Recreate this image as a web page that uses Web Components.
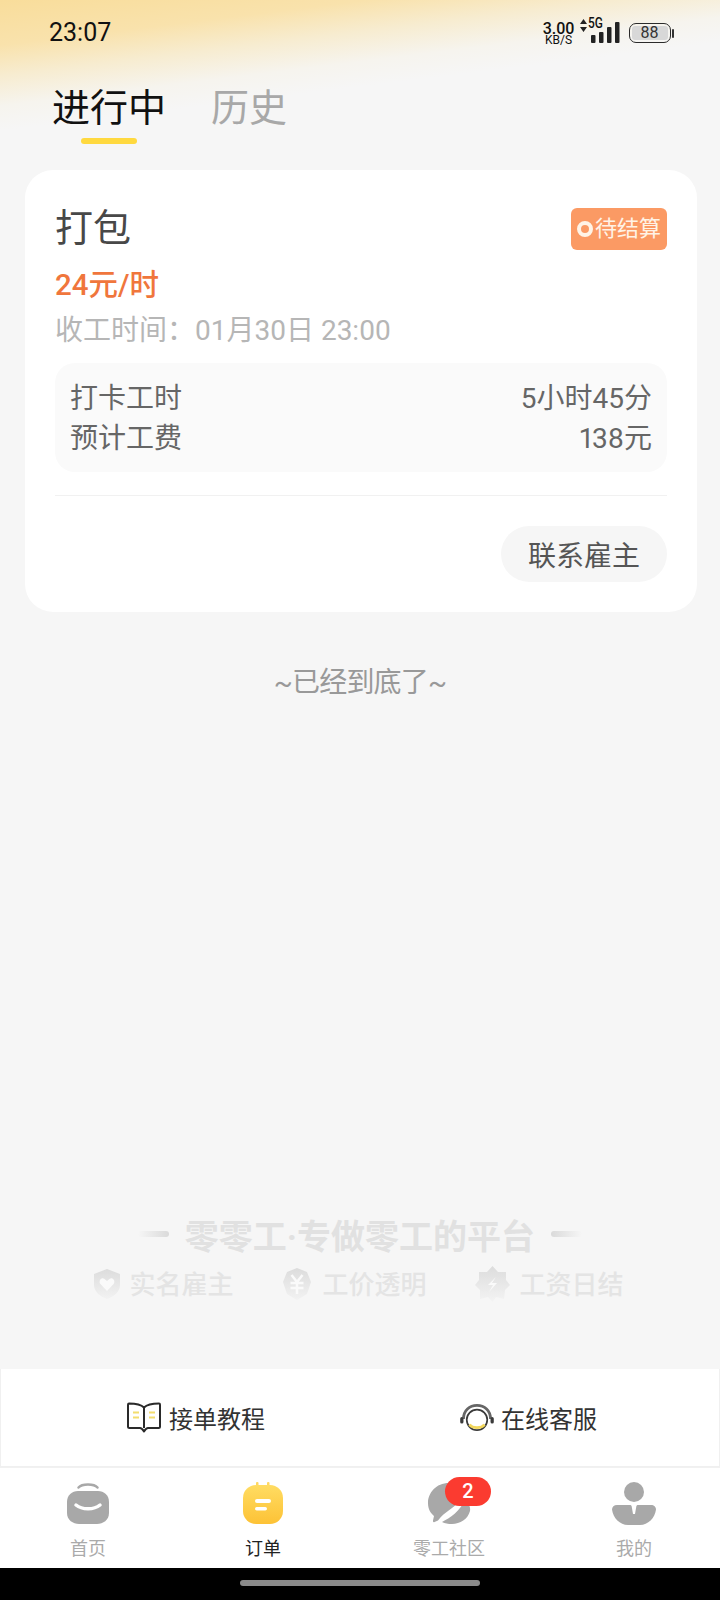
<!DOCTYPE html>
<html lang="zh">
<head>
<meta charset="utf-8">
<title>订单</title>
<style>
  html, body { margin: 0; padding: 0; }
  body { width: 720px; height: 1600px; overflow: hidden; font-family: Roboto, "Noto Sans CJK SC", sans-serif; }
</style>
</head>
<body>
<order-page>
  <status-bar></status-bar>
  <order-tabs></order-tabs>
  <order-card title="打包" wage="24元/时" finish="收工时间：01月30日 23:00" status="待结算" action="联系雇主">
    <info-row label="打卡工时" value="5小时45分"></info-row>
    <info-row label="预计工费" value="138元"></info-row>
  </order-card>
  <end-note></end-note>
  <brand-mark slot="bottom"></brand-mark>
  <help-bar slot="bottom"></help-bar>
  <tab-bar slot="bottom"></tab-bar>
  <gesture-bar slot="bottom"></gesture-bar>
</order-page>

<script>
class OrderPage extends HTMLElement {
    connectedCallback() {
        this.attachShadow({ mode: "open" })
        this.shadowRoot.innerHTML = `
      <style>
        :host {
          display: flex;
          flex-direction: column;
          width: 720px;
          height: 1600px;
          background: linear-gradient(173deg, #f9dd9b 0, #f9e2ac 45px, #f7ecd0 75px, #f6f4ee 105px, #f6f6f6 130px);
        }
        .grow { flex: 1; }
      </style>
      <slot></slot>
      <div class="grow"></div>
      <slot name="bottom"></slot>
    `
    }
}

class StatusBar extends HTMLElement {
    connectedCallback() {
        this.attachShadow({ mode: "open" })
        this.shadowRoot.innerHTML = `
      <style>
        :host {
          display: flex;
          align-items: center;
          justify-content: space-between;
          height: 64px;
          padding: 0 46px 0 49px;
          color: #111;
        }
        .time { font-size: 25px; }
        .right { display: flex; align-items: center; height: 32px; margin-top: 2px; }
        .speed {
          display: flex;
          flex-direction: column;
          align-items: center;
          width: 34px;
          margin-top: 1px;
        }
        .speed b { font-size: 16px; font-weight: 500; line-height: 13px; height: 13px; }
        .speed i { font-size: 12px; font-style: normal; line-height: 11px; height: 11px; }
        .arrows { margin: 0 3px 16px 4px; }
        .net { position: relative; width: 30px; height: 22px; margin-top: -2px; }
        .net span {
          position: absolute;
          left: -2px;
          top: -5px;
          font-size: 14px;
          line-height: 14px;
          font-weight: 500;
          transform: scaleX(.85);
          transform-origin: left top;
        }
        .net svg { display: block; }
        .battery {
          box-sizing: border-box;
          display: flex;
          width: 42px;
          height: 20px;
          margin-left: 9px;
          padding: 2px;
          border: 1.5px solid #2b2b2b;
          border-radius: 7px;
        }
        .battery span {
          flex: 1;
          border-radius: 3px;
          background: #d8d8d8;
          font-size: 16px;
          line-height: 13px;
          text-align: center;
          color: #333;
        }
        .tip { width: 2px; height: 9px; margin-left: 1.5px; border-radius: 1px; background: #333; }
      </style>
      <span class="time">23:07</span>
      <div class="right">
        <div class="speed"><b>3.00</b><i>KB/S</i></div>
        <svg class="arrows" width="7" height="13" viewBox="0 0 7 13"><path d="M3.500 0 7 5H0zM3.500 13 0 8h7z" fill="#222"/></svg>
        <div class="net">
          <span>5G</span>
          <svg width="30" height="22" viewBox="0 0 30 22">
            <rect x="1" y="14" width="4.500" height="8" rx="1" fill="#222"/>
            <rect x="9" y="11" width="4.500" height="11" rx="1" fill="#222"/>
            <rect x="17" y="6" width="4.500" height="16" rx="1" fill="#222"/>
            <rect x="25" y="1" width="4.500" height="21" rx="1" fill="#222"/>
          </svg>
        </div>
        <div class="battery"><span>88</span></div>
        <div class="tip"></div>
      </div>
    `
    }
}

class OrderTabs extends HTMLElement {
    connectedCallback() {
        this.attachShadow({ mode: "open" })
        this.shadowRoot.innerHTML = `
      <style>
        :host {
          display: flex;
          gap: 45px;
          height: 106px;
          padding-left: 52px;
          box-sizing: border-box;
          font-size: 38px;
        }
        .tab {
          display: flex;
          flex-direction: column;
          align-items: center;
          line-height: 50px;
          padding-top: 19px;
          color: #a8a8a8;
        }
        .tab.on { color: #111; }
        .line { width: 56px; height: 6px; margin-top: 5px; border-radius: 3px; background: #ffd93f; }
      </style>
      <div class="tab on">进行中<div class="line"></div></div>
      <div class="tab">历史</div>
    `
    }
}

class OrderCard extends HTMLElement {
    connectedCallback() {
        this.attachShadow({ mode: "open" })
        this.shadowRoot.innerHTML = `
      <style>
        :host {
          display: block;
          box-sizing: border-box;
          width: 672px;
          height: 442px;
          margin-left: 25px;
          padding: 33px 30px 0;
          border-radius: 28px;
          background: #fff;
        }
        .head { display: flex; justify-content: space-between; align-items: flex-start; }
        .title { font-size: 38px; line-height: 50px; color: #484848; }
        .badge {
          box-sizing: border-box;
          display: flex;
          align-items: center;
          gap: 2px;
          width: 96px;
          height: 42px;
          margin-top: 5px;
          padding: 0 0 7px 6px;
          border-radius: 6px;
          background: #fb9a64;
          font-size: 22px;
          color: #fff3e6;
        }
        .ring { width: 8px; height: 8px; margin-top: 7px; border: 4px solid #fff3e6; border-radius: 50%; }
        .wage { margin-top: 12px; font-size: 29.500px; line-height: 40px; font-weight: 500; color: #f0763c; }
        .finish { margin-top: 4px; font-size: 28px; line-height: 44px; color: #b6b6b6; }
        .box {
          display: flex;
          flex-direction: column;
          margin-top: 10px;
          padding: 16px 15px 13px;
          border-radius: 20px;
          background: #fafafa;
        }
        .rule { height: 1px; margin-top: 23px; background: #f1f1f1; }
        .foot { display: flex; justify-content: flex-end; margin-top: 30px; }
        .btn {
          display: flex;
          align-items: center;
          justify-content: center;
          width: 166px;
          height: 56px;
          border-radius: 28px;
          background: #f6f6f6;
          font-size: 28px;
          color: #555;
        }
      </style>
      <div class="head">
        <div class="title">${this.getAttribute("title")}</div>
        <div class="badge"><span class="ring"></span>${this.getAttribute("status")}</div>
      </div>
      <div class="wage">${this.getAttribute("wage")}</div>
      <div class="finish">${this.getAttribute("finish")}</div>
      <div class="box"><slot></slot></div>
      <div class="rule"></div>
      <div class="foot"><div class="btn">${this.getAttribute("action")}</div></div>
    `
    }
}

class InfoRow extends HTMLElement {
    connectedCallback() {
        this.attachShadow({ mode: "open" })
        this.shadowRoot.innerHTML = `
      <style>
        :host {
          display: flex;
          justify-content: space-between;
          height: 40px;
          line-height: 40px;
          font-size: 28px;
          color: #666;
        }
        .val { font-variant-numeric: proportional-nums; }
      </style>
      <span>${this.getAttribute("label")}</span>
      <span class="val">${this.getAttribute("value")}</span>
    `
    }
}

class EndNote extends HTMLElement {
    connectedCallback() {
        this.attachShadow({ mode: "open" })
        this.shadowRoot.innerHTML = `
      <style>
        :host {
          display: block;
          margin-top: 49px;
          line-height: 44px;
          text-align: center;
          font-size: 28px;
          letter-spacing: -.8px;
          color: #999;
        }
      </style>
      ~已经到底了~
    `
    }
}

class BrandMark extends HTMLElement {
    connectedCallback() {
        this.attachShadow({ mode: "open" })
        this.shadowRoot.innerHTML = `
      <style>
        :host {
          display: flex;
          flex-direction: column;
          align-items: center;
          height: 157px;
          color: #e1e1e1;
        }
        .top {
          display: flex;
          align-items: center;
          gap: 16px;
          height: 44px;
          font-size: 34px;
          font-weight: 700;
        }
        .dash { width: 31px; height: 6px; border-radius: 3px; background: linear-gradient(to right, rgba(218,218,218,0), #dadada); }
        .dash.r { transform: scaleX(-1); }
        .feats {
          display: flex;
          align-items: center;
          height: 48px;
          margin-top: 2px;
          padding-right: 3px;
          font-size: 26px;
          font-weight: 500;
          color: #e4e4e4;
        }
        .feat { display: flex; align-items: center; }
        .feat svg { display: block; margin-top: 3px; }
      </style>
      <div class="top"><div class="dash"></div>零零工·专做零工的平台<div class="dash r"></div></div>
      <div class="feats">
        <div class="feat" style="gap:8px">
          <svg width="28" height="30" viewBox="0 0 28 30">
            <defs><linearGradient id="f1" x1="0" y1="0" x2="0" y2="1"><stop offset="0" stop-color="#dcdcdc"/><stop offset="1" stop-color="#dcdcdc" stop-opacity=".15"/></linearGradient></defs>
            <path d="M14 0 27 5V16C27 23 20 28 14 30 8 28 1 23 1 16V5z" fill="url(#f1)"/>
            <path d="M14 22 7 14.500C5.500 11 9 8 11.500 10L14 12 16.500 10C19 8 22.500 11 21 14.500z" fill="#fafafa"/>
          </svg>
          <span>实名雇主</span>
        </div>
        <div class="feat" style="gap:11px;margin-left:50px">
          <svg width="28" height="32" viewBox="0 0 28 32">
            <defs><linearGradient id="f2" x1="0" y1="0" x2="0" y2="1"><stop offset="0" stop-color="#dcdcdc"/><stop offset="1" stop-color="#dcdcdc" stop-opacity=".15"/></linearGradient></defs>
            <path d="M14 0 24 4 28 14 24 26 14 32 4 26 0 14 4 4z" fill="url(#f2)"/>
            <path d="M8.500 7 14 14 19.500 7M7.500 15H20.500M7.500 20H20.500M14 14V26" fill="none" stroke="#fafafa" stroke-width="2.500"/>
          </svg>
          <span>工价透明</span>
        </div>
        <div class="feat" style="gap:10px;margin-left:48px">
          <svg width="35" height="36" viewBox="0 0 35 36">
            <defs><linearGradient id="f3" x1="0" y1="0" x2="0" y2="1"><stop offset="0" stop-color="#dcdcdc"/><stop offset="1" stop-color="#dcdcdc" stop-opacity=".1"/></linearGradient></defs>
            <path d="M17.500 0 23 6 31 6 31 14 35 19 30 24 29 33 21 31 17.500 36 13 31 5 33 5 24 0 19 4 14 4 6 12 6z" fill="url(#f3)"/>
            <path d="M21 11 13 19H18L14 26 22 17H17z" fill="#fafafa"/>
          </svg>
          <span>工资日结</span>
        </div>
      </div>
    `
    }
}

class HelpBar extends HTMLElement {
    connectedCallback() {
        this.attachShadow({ mode: "open" })
        this.shadowRoot.innerHTML = `
      <style>
        :host {
          display: flex;
          align-items: center;
          box-sizing: border-box;
          height: 98px;
          padding-left: 126px;
          background: #fff;
          border: 1px solid #f0f0f0;
          border-top: 0;
          font-size: 24px;
          color: #333;
        }
        .item { display: flex; align-items: center; gap: 8px; }
        svg { display: block; }
      </style>
      <div class="item">
        <svg width="34" height="31" viewBox="0 0 34 31">
          <path d="M17 5.500C14 2.500 8 1.500 2 1.500 1.200 1.500 1 2 1 2.800V24.500C1 25.500 1.500 26 2.500 26H13C15 26 15.500 27 17 29.500 18.500 27 19 26 21 26H31.500C32.500 26 33 25.500 33 24.500V2.800C33 2 32.800 1.500 32 1.500 26 1.500 20 2.500 17 5.500ZM17 5.500V26" fill="none" stroke="#2a2a2a" stroke-width="2" stroke-linejoin="round"/>
          <path d="M6 10.500H12M6 15.500H12M22 10.500H28M22 15.500H28" stroke="#f3de6e" stroke-width="2.200"/>
        </svg>
        <span>接单教程</span>
      </div>
      <div class="item" style="margin-left:195px;gap:7px">
        <svg width="34" height="28" viewBox="0 0 36 30">
          <path d="M3.500 16C3.500 7 10 1.500 18 1.500S32.500 7 32.500 16" fill="none" stroke="#666" stroke-width="3"/>
          <circle cx="18" cy="17" r="11" fill="#fff" stroke="#3a3a3a" stroke-width="1.800"/>
          <path d="M10 22C13 26.500 23 26.500 26 22" fill="none" stroke="#f2d75c" stroke-width="3"/>
          <rect x="0" y="14" width="3.500" height="7" rx="1.700" fill="#3a3a3a"/>
          <rect x="32.500" y="14" width="3.500" height="7" rx="1.700" fill="#3a3a3a"/>
        </svg>
        <span>在线客服</span>
      </div>
    `
    }
}

class TabBar extends HTMLElement {
    connectedCallback() {
        this.attachShadow({ mode: "open" })
        this.shadowRoot.innerHTML = `
      <style>
        :host {
          display: grid;
          grid-template-columns: 176px 174px 198px 172px;
          box-sizing: border-box;
          height: 101px;
          background: #fff;
          border-top: 1px solid #f1f1f1;
        }
        .item {
          position: relative;
          display: flex;
          flex-direction: column;
          align-items: center;
          font-size: 18px;
          color: #aaa;
        }
        .item.on { color: #222; }
        .icon { display: block; height: 44px; margin-top: 14px; }
        .label { line-height: 26px; margin-top: 10px; }
        .pill {
          position: absolute;
          left: 95px;
          top: 9px;
          width: 46px;
          height: 29px;
          border-radius: 15px;
          background: #fb3b30;
          text-align: center;
          font-size: 20px;
          line-height: 29px;
          font-weight: 500;
          color: #fff;
        }
      </style>
      <div class="item">
        <svg class="icon" width="44" height="44" viewBox="0 0 44 44">
          <path d="M12.500 5.500C16 1.500 28 1.500 31.500 5.500" fill="none" stroke="#a8a8a8" stroke-width="2.500" stroke-linecap="round"/>
          <path d="M12 9H32C38 9 43 13 43 20V31C43 38 37 42 31 42H13C7 42 1 38 1 31V20C1 13 6 9 12 9Z" fill="#a8a8a8"/>
          <path d="M10 23C16 28 28 28 34 23" fill="none" stroke="#fff" stroke-width="3.500" stroke-linecap="round"/>
        </svg>
        <span class="label">首页</span>
      </div>
      <div class="item on">
        <svg class="icon" width="44" height="44" viewBox="0 0 44 44">
          <defs><linearGradient id="ord" x1="0" y1="0" x2="0" y2="1"><stop offset="0" stop-color="#ffdc62"/><stop offset="1" stop-color="#fdc236"/></linearGradient></defs>
          <rect x="15" y="0" width="2.500" height="5" rx="1" fill="#ffd862"/>
          <rect x="26" y="0" width="2.500" height="5" rx="1" fill="#ffd862"/>
          <rect x="2" y="3" width="40" height="39" rx="13" fill="url(#ord)"/>
          <rect x="14" y="17" width="16" height="4" rx="2" fill="#fff"/>
          <rect x="14" y="25" width="12" height="3.500" rx="1.700" fill="#fff"/>
        </svg>
        <span class="label">订单</span>
      </div>
      <div class="item">
        <svg class="icon" width="44" height="44" viewBox="0 0 44 44">
          <path d="M22 1C9 1 1 11 1 21 1 27 3.500 31 7 34L6 38.500C5.800 40 6.500 40.500 7.500 40L11 38.500C17 30 27 26 33 19 37 14 36 8 33 4 30 2 26 1 22 1Z" fill="#a8a8a8"/>
          <path d="M38 18C41 21 44 25 43 29 41 37 33 42 25 42 21 42 18 41.500 15 40 23 36 33 29 38 18Z" fill="#a8a8a8"/>
        </svg>
        <span class="label">零工社区</span>
        <span class="pill">2</span>
      </div>
      <div class="item">
        <svg class="icon" width="44" height="44" viewBox="0 0 44 44">
          <circle cx="22" cy="10" r="10" fill="#a8a8a8"/>
          <path d="M5 23H18C19 23 19.500 23.500 19.700 24.500L21 32H23L24.300 24.500C24.500 23.500 25 23 26 23H39C42 23 44 25 44 27.500 43 36 36 43 28 43H16C8 43 1 36 0 27.500 0 25 2 23 5 23Z" fill="#a8a8a8"/>
        </svg>
        <span class="label">我的</span>
      </div>
    `
    }
}

class GestureBar extends HTMLElement {
    connectedCallback() {
        this.attachShadow({ mode: "open" })
        this.shadowRoot.innerHTML = `
      <style>
        :host {
          display: flex;
          justify-content: center;
          box-sizing: border-box;
          height: 32px;
          padding-top: 12px;
          background: #000;
        }
        div { width: 240px; height: 6px; border-radius: 3px; background: #8a8a8a; }
      </style>
      <div></div>
    `
    }
}

customElements.define("order-page", OrderPage)
customElements.define("status-bar", StatusBar)
customElements.define("order-tabs", OrderTabs)
customElements.define("order-card", OrderCard)
customElements.define("info-row", InfoRow)
customElements.define("end-note", EndNote)
customElements.define("brand-mark", BrandMark)
customElements.define("help-bar", HelpBar)
customElements.define("tab-bar", TabBar)
customElements.define("gesture-bar", GestureBar)
</script>
</body>
</html>
